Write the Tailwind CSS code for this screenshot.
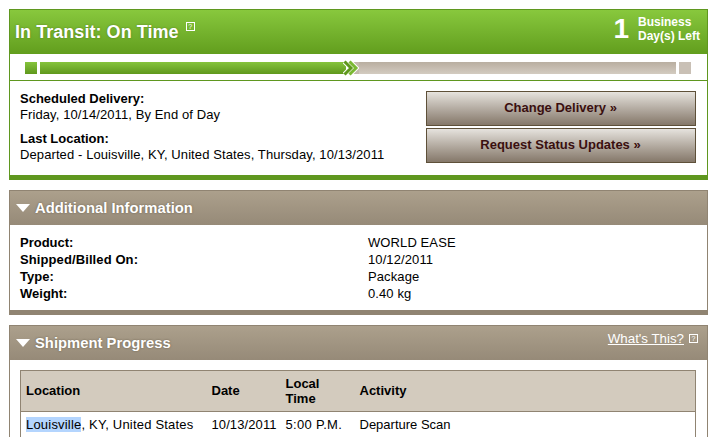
<!DOCTYPE html>
<html lang="en">
<head>
    <meta charset="UTF-8">
    <title>Tracking Detail</title>
    <script src="https://cdn.jsdelivr.net/npm/@tailwindcss/browser@4"></script>
</head>
<body class="bg-white font-['Liberation_Sans',Arial,sans-serif] text-[13px] tracking-[0.1px] text-black overflow-hidden">
<div class="w-[713px] h-[437px] overflow-hidden pt-[9px] pl-[9px]">

    <!-- status panel -->
    <section class="w-[699px] h-[171px] border-x border-t border-[#5f971f] flex flex-col">
        <div class="h-[44px] shrink-0 bg-gradient-to-b from-[#88c83d] to-[#629e1d] flex items-start text-white font-bold tracking-normal">
            <h1 class="text-[18px] leading-[20px] mt-[12px] ml-[5px] tracking-[0.05px] [text-shadow:0_0_2px_rgba(60,90,20,0.6)]">In Transit: On Time</h1>
            <span class="ml-[7px] mt-[12px] w-[9px] h-[9px] border border-white flex items-center justify-center text-[7px] leading-none font-normal">?</span>
            <span class="ml-auto mt-[4px] text-[28px] leading-[30px]">1</span>
            <div class="ml-[9px] mr-[5px] mt-[5px] text-[12px] leading-[14px] w-[64px]">Business<br>Day(s) Left</div>
        </div>
        <div class="h-[27px] shrink-0 border-b border-[#5f971f] pt-[8px] pl-[15px] flex items-start">
            <div class="w-[12px] h-[12px] bg-gradient-to-b from-[#86c43c] to-[#5f981c]"></div>
            <div class="ml-[3px] w-[306px] h-[12px] bg-gradient-to-b from-[#86c43c] to-[#5f981c]"></div>
            <svg class="w-[16px] h-[16px] -mt-[2px] -ml-[3px] shrink-0 relative" viewBox="0 0 16 16">
                <path d="M6 2h10v12H6z" fill="#c3b9ac"/>
                <path d="M1.5 1.5 8 8l-6.500 6.500M6.500 1.500 13 8l-6.500 6.500" fill="none" stroke="#fff" stroke-width="5"/>
                <path d="M1.500 1.500 8 8l-6.500 6.500" fill="none" stroke="#5f981c" stroke-width="3"/>
                <path d="M6.500 1.500 13 8l-6.500 6.500" fill="none" stroke="#7ab832" stroke-width="3"/>
            </svg>
            <div class="w-[318px] h-[12px] -ml-[1px] bg-gradient-to-b from-[#b9aea0] to-[#d3cbc0]"></div>
            <div class="ml-[3px] w-[12px] h-[12px] bg-[#c9c0b5]"></div>
        </div>
        <div class="flex-1 flex justify-between min-h-0">
            <div class="pl-[10px] pt-[10px] leading-[16px]">
                <p class="font-bold tracking-normal">Scheduled Delivery:</p>
                <p>Friday, 10/14/2011, By End of Day</p>
                <p class="font-bold tracking-normal mt-[8px]">Last Location:</p>
                <p>Departed - Louisville, KY, United States, Thursday, 10/13/2011</p>
            </div>
            <div class="pt-[10px] pr-[11px] flex flex-col gap-[2px]">
                <button class="w-[270px] h-[35px] pb-[2px] pr-[1px] border border-[#5e5039] bg-gradient-to-b from-[#e6e3de] to-[#85786a] font-bold tracking-normal text-[#3a0f0f]">Change Delivery »</button>
                <button class="w-[270px] h-[35px] pb-[2px] pr-[1px] border border-[#5e5039] bg-gradient-to-b from-[#e6e3de] to-[#85786a] font-bold tracking-normal text-[#3a0f0f]">Request Status Updates »</button>
            </div>
        </div>
        <div class="h-[5px] shrink-0 -mx-px bg-[#5f971f]"></div>
    </section>

    <!-- additional information -->
    <section class="mt-[10px] w-[699px] h-[125px] border-x border-t border-[#908472] flex flex-col">
        <div class="h-[34px] shrink-0 bg-gradient-to-b from-[#aca08c] to-[#968a78] flex items-center pl-[6px] text-white font-bold tracking-normal">
            <svg class="w-[14px] h-[8px]" viewBox="0 0 14 8"><path d="M0 0h14L7 8z" fill="#fff"/></svg>
            <h2 class="ml-[5px] text-[14.8px] [text-shadow:0_0_2px_rgba(80,70,50,0.7)]">Additional Information</h2>
        </div>
        <dl class="flex-1 grid grid-cols-[348px_1fr] content-start pl-[10px] pt-[9px] leading-[17px]">
            <dt class="font-bold tracking-normal">Product:</dt><dd>WORLD EASE</dd>
            <dt class="font-bold tracking-[0.1px]">Shipped/Billed On:</dt><dd>10/12/2011</dd>
            <dt class="font-bold tracking-normal">Type:</dt><dd>Package</dd>
            <dt class="font-bold tracking-normal">Weight:</dt><dd>0.40 kg</dd>
        </dl>
        <div class="h-[5px] shrink-0 -mx-px bg-[#908472]"></div>
    </section>

    <!-- shipment progress -->
    <section class="mt-[10px] w-[699px] h-[120px] border-x border-t border-[#908472]">
        <div class="h-[34px] bg-gradient-to-b from-[#aca08c] to-[#968a78] flex items-center pl-[6px] text-white font-bold tracking-normal">
            <svg class="w-[14px] h-[8px]" viewBox="0 0 14 8"><path d="M0 0h14L7 8z" fill="#fff"/></svg>
            <h2 class="ml-[5px] text-[14.8px] [text-shadow:0_0_2px_rgba(80,70,50,0.7)]">Shipment Progress</h2>
            <a class="ml-auto -mt-[9px] font-normal underline text-[13.300px]">What's This?</a>
            <span class="ml-[5px] mr-[9px] -mt-[9px] w-[9px] h-[9px] border border-white flex items-center justify-center text-[7px] leading-none font-normal">?</span>
        </div>
        <div class="pl-[10px] pt-[10px]">
            <table class="w-[676px] table-fixed border border-[#908472]">
                <thead>
                    <tr class="h-[41px] bg-[#d3cbbe] border-b border-[#908472] text-left leading-[15px] tracking-normal">
                        <th class="w-[191px] pl-[5px] pb-[2px] font-bold">Location</th>
                        <th class="w-[74px] pb-[2px] font-bold">Date</th>
                        <th class="w-[74px] pb-[1px] font-bold">Local<br>Time</th>
                        <th class="pb-[2px] font-bold">Activity</th>
                    </tr>
                </thead>
                <tbody>
                    <tr class="h-[26px]">
                        <td class="pl-[5px] tracking-[0.2px]"><span class="bg-[#b4d5fe]">Louisville</span>, KY, United States</td>
                        <td>10/13/2011</td>
                        <td class="tracking-[0.3px]">5:00 P.M.</td>
                        <td class="tracking-normal">Departure Scan</td>
                    </tr>
                </tbody>
            </table>
        </div>
    </section>
</div>
</body>
</html>
